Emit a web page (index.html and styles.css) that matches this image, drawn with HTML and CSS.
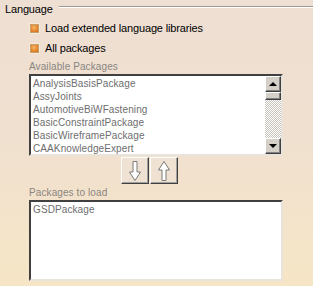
FILE: index.html
```html
<!DOCTYPE html>
<html lang="en">
<head>
    <meta charset="UTF-8">
    <title>Language</title>
    <link rel="stylesheet" href="styles.css">
</head>
<body>
  <div class="frame-title">
    <span>Language</span>
    <div class="rule"></div>
  </div>

  <div class="opts">
    <label class="check-row"><span class="check"></span>Load extended language libraries</label>
    <label class="check-row"><span class="check"></span>All packages</label>
  </div>

  <div class="field">
    <div class="field-label">Available Packages</div>
    <div class="listbox">
      <ul class="items">
        <li>AnalysisBasisPackage</li>
        <li>AssyJoints</li>
        <li>AutomotiveBiWFastening</li>
        <li>BasicConstraintPackage</li>
        <li>BasicWireframePackage</li>
        <li>CAAKnowledgeExpert</li>
      </ul>
      <div class="scrollbar">
        <div class="sb-btn"><span class="tri-up"></span></div>
        <div class="sb-thumb"></div>
        <div class="sb-track"></div>
        <div class="sb-btn"><span class="tri-down"></span></div>
      </div>
    </div>
  </div>

  <div class="move-btns">
    <button class="move-btn" title="Add">
      <svg width="12" height="20" viewBox="0 0 12 20">
        <polygon points="4,0.5 8,0.5 8,11 11.5,11 6,19.5 0.5,11 4,11" fill="#fff" stroke="#7a7a7a" stroke-width="1"/>
      </svg>
    </button>
    <button class="move-btn" title="Remove">
      <svg width="12" height="20" viewBox="0 0 12 20">
        <polygon points="6,0.5 11.5,9 8,9 8,19.5 4,19.5 4,9 0.5,9" fill="#fff" stroke="#7a7a7a" stroke-width="1"/>
      </svg>
    </button>
  </div>

  <div class="field">
    <div class="field-label">Packages to load</div>
    <div class="listbox short">
      <ul class="items">
        <li>GSDPackage</li>
      </ul>
    </div>
  </div>
</body>
</html>
```

FILE: styles.css
```css
html, body {
    height: 100%;
}
body {
    margin: 0;
    font-family: "Liberation Sans", Arial, sans-serif;
    font-size: 11px;
    letter-spacing: -0.15px;
    color: #000;
    background: linear-gradient(#eedfd3, #f0e0cf 50%, #f6e6c6);
}
.frame-title {
    display: flex;
    align-items: center;
    height: 14px;
    padding: 2px 0 0 5px;
}
.frame-title .rule {
    flex: 1;
    margin-left: 6px;
    margin-top: -4px;
    border-top: 1px solid #a09890;
    border-bottom: 1px solid #fff;
}
.opts {
    padding: 2px 0 0 29px;
}
.check-row {
    display: flex;
    align-items: center;
    height: 20px;
}
.check {
    width: 9px;
    height: 9px;
    margin-right: 5px;
    border: 1px solid #f4ead8;
    box-shadow: inset 0 0 0 1px #c8a070;
    background: radial-gradient(circle at 45% 40%, #f6b868, #e07a22 60%, #b85a10);
}
.field {
    padding-left: 29px;
    font-size: 10px;
    letter-spacing: 0.1px;
}
.field-label {
    color: #8a8580;
    height: 14px;
    line-height: 13px;
    margin-top: 2px;
}
.listbox {
    display: flex;
    width: 250px;
    height: 78px;
    background: #fff;
    border-top: 2px solid #404040;
    border-left: 2px solid #404040;
    border-right: 2px solid #e8e4dc;
    border-bottom: 2px solid #e8e4dc;
}
.listbox.short {
    height: 77px;
}
.items {
    flex: 1;
    list-style: none;
    margin: 0;
    padding: 1px 0 0 2px;
    color: #6e6e6e;
}
.items li {
    height: 13px;
    line-height: 13px;
}
.scrollbar {
    display: flex;
    flex-direction: column;
    width: 16px;
}
.sb-btn, .sb-thumb {
    box-sizing: border-box;
    background: #d4d0c8;
    border-top: 1px solid #fff;
    border-left: 1px solid #fff;
    border-right: 1px solid #404040;
    border-bottom: 1px solid #404040;
    box-shadow: inset -1px -1px 0 #808080;
}
.sb-btn {
    height: 16px;
    display: flex;
    align-items: center;
    justify-content: center;
}
.sb-thumb {
    height: 8px;
}
.sb-track {
    flex: 1;
    background-image: conic-gradient(#fff 25%, #c8c4bc 0 50%, #fff 0 75%, #c8c4bc 0);
    background-size: 2px 2px;
}
.tri-up, .tri-down {
    width: 0;
    height: 0;
    border-left: 4px solid transparent;
    border-right: 4px solid transparent;
}
.tri-up {
    border-bottom: 4px solid #000;
    margin-top: -1px;
}
.tri-down {
    border-top: 4px solid #000;
}
.move-btns {
    display: flex;
    padding-left: 121px;
    margin-top: 1px;
    gap: 1px;
}
.move-btn {
    box-sizing: border-box;
    width: 28px;
    height: 27px;
    padding: 0;
    display: flex;
    align-items: center;
    justify-content: center;
    background: #efe2d2;
    border-top: 1px solid #fff;
    border-left: 1px solid #fff;
    border-right: 1px solid #404040;
    border-bottom: 1px solid #404040;
    box-shadow: inset -1px -1px 0 #a0a0a0;
}
```
